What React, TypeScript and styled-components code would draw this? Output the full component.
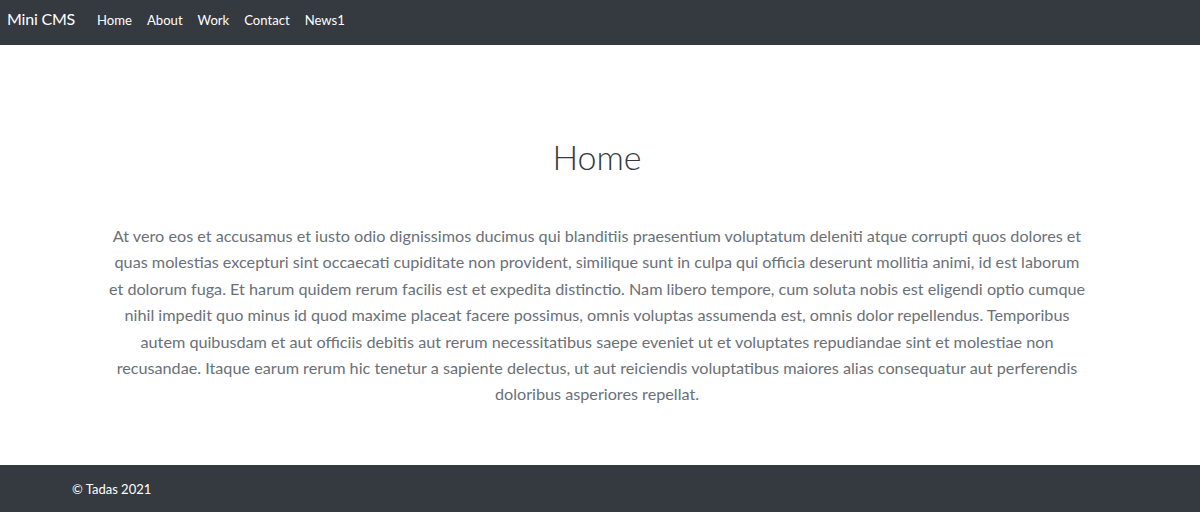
import React from "react";
import styled, { createGlobalStyle } from "styled-components";

const Global = createGlobalStyle`
  html, body { margin: 0; padding: 0; background: #fff; }
  body { font-family: Lato, "Noto Sans", sans-serif; }
  * { box-sizing: border-box; }
`;

const Nav = styled.nav`
  height: 45px;
  background: #343a40;
  display: flex;
  align-items: center;
  padding: 0 7px 9px;
`;

const Brand = styled.a`
  color: #fff;
  font-size: 16px;
  letter-spacing: -0.2px;
  margin-right: 22px;
  text-decoration: none;
`;

const NavList = styled.ul`
  display: flex;
  gap: 15px;
  list-style: none;
  margin: 0;
  padding: 0;
`;

const NavLink = styled.a`
  color: #fff;
  font-size: 13.1px;
  text-decoration: none;
`;

const Main = styled.main`
  height: 420px;
  display: flex;
  flex-direction: column;
  align-items: center;
  padding: 88px 6px 0 0;
`;

const Title = styled.h1`
  margin: 0;
  font-size: 34px;
  font-weight: 300;
  color: #343a40;
  line-height: 48px;
`;

const Lead = styled.p`
  margin: 42px 0 0;
  width: 980px;
  text-align: center;
  color: #6a7078;
  font-size: 16.2px;
  font-weight: 400;
  line-height: 26.4px;
`;

const Footer = styled.footer`
  height: 47px;
  background: #343a40;
  display: flex;
  align-items: center;
  padding-left: 72px;
  color: #fff;
  font-size: 13px;
`;

const links = ["Home", "About", "Work", "Contact", "News1"];

export default function App() {
  return (
    <>
      <Global />
      <Nav>
        <Brand href="#">Mini CMS</Brand>
        <NavList>
          {links.map((l) => (
            <li key={l}>
              <NavLink href="#">{l}</NavLink>
            </li>
          ))}
        </NavList>
      </Nav>
      <Main>
        <Title>Home</Title>
        <Lead>
          At vero eos et accusamus et iusto odio dignissimos ducimus qui blanditiis praesentium voluptatum deleniti atque corrupti quos dolores et quas molestias excepturi sint occaecati cupiditate non provident, similique sunt in culpa qui officia deserunt mollitia animi, id est laborum et dolorum fuga. Et harum quidem rerum facilis est et expedita distinctio. Nam libero tempore, cum soluta nobis est eligendi optio cumque nihil impedit quo minus id quod maxime placeat facere possimus, omnis voluptas assumenda est, omnis dolor repellendus. Temporibus autem quibusdam et aut officiis debitis aut rerum necessitatibus saepe eveniet ut et voluptates repudiandae sint et molestiae non recusandae. Itaque earum rerum hic tenetur a sapiente delectus, ut aut reiciendis voluptatibus maiores alias consequatur aut perferendis doloribus asperiores repellat.
        </Lead>
      </Main>
      <Footer>© Tadas 2021</Footer>
    </>
  );
}
